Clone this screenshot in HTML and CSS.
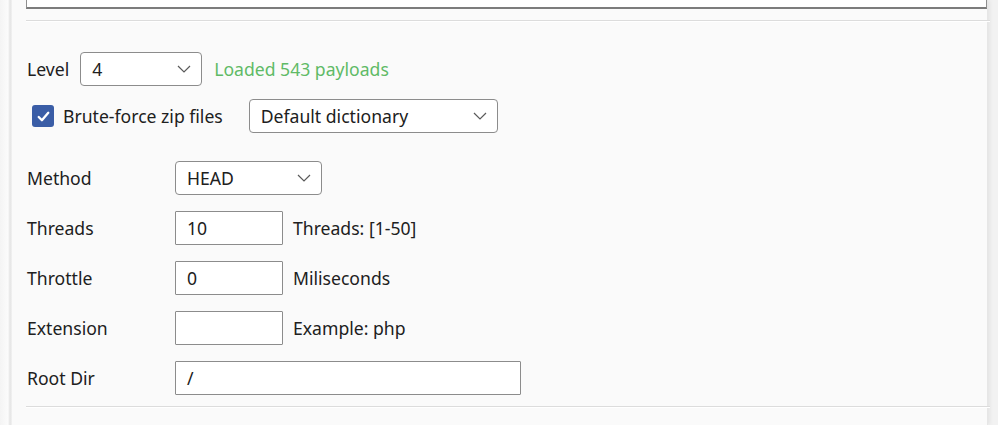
FILE: index.html
```html
<!DOCTYPE html>
<html lang="en">
<head>
    <meta charset="UTF-8">
    <title>Directory scan options</title>
    <link rel="stylesheet" href="styles.css">
</head>
<body>
<div class="panel">
    <div class="results"></div>
    <hr class="rule">

    <div class="line level-line">
        <span class="label">Level</span>
        <div class="select level-select">
            <span>4</span>
            <svg class="chevron" viewBox="0 0 14 8"><path d="M1 1l6 6 6-6"/></svg>
        </div>
        <span class="loaded">Loaded 543 payloads</span>
    </div>

    <div class="line zip-line">
        <label class="check">
            <span class="box">
                <svg viewBox="0 0 16 16"><path d="M3.5 8.5l3 3 6-7"/></svg>
            </span>
            Brute-force zip files
        </label>
        <div class="select dict-select">
            <span>Default dictionary</span>
            <svg class="chevron" viewBox="0 0 14 8"><path d="M1 1l6 6 6-6"/></svg>
        </div>
    </div>

    <div class="form">
        <span class="label">Method</span>
        <div class="field">
            <div class="select method-select">
                <span>HEAD</span>
                <svg class="chevron" viewBox="0 0 14 8"><path d="M1 1l6 6 6-6"/></svg>
            </div>
        </div>

        <span class="label">Threads</span>
        <div class="field">
            <div class="input">10</div>
            <span class="hint">Threads: [1-50]</span>
        </div>

        <span class="label">Throttle</span>
        <div class="field">
            <div class="input">0</div>
            <span class="hint">Miliseconds</span>
        </div>

        <span class="label">Extension</span>
        <div class="field">
            <div class="input"></div>
            <span class="hint">Example: php</span>
        </div>

        <span class="label">Root Dir</span>
        <div class="field">
            <div class="input wide">/</div>
        </div>
    </div>

    <hr class="rule bottom">
</div>
</body>
</html>
```

FILE: styles.css
```css
html, body {
    margin: 0;
    height: 100%;
}
body {
    overflow: hidden;
    background: linear-gradient(to right, #f4f4f4 0, #fbfbfb 8px, #e4e4e4 10px, #f2f2f2 12px);
    font: 17.6px "Noto Sans", "Open Sans", sans-serif;
    color: #202020;
}
.panel {
    display: flow-root;
    box-sizing: border-box;
    margin: 0 11px 0 12px;
    height: 100%;
    padding: 0 0 0 14px;
    background-color: #fafafa;
    box-shadow: 1px 0 0 #e6e6e6, 3px 0 4px rgba(0,0,0,.06);
}
.results {
    margin: -40px 0 0 0;
    height: 46px;
    border: 1px solid #8f8f8f;
    border-bottom: 2px solid #7c7c7c;
    background-color: #fff;
}
.rule {
    margin: 11px -3px 0 0;
    border: 0;
    height: 0;
    border-top: 1px solid #dcdcdc;
    box-shadow: 0 1px 0 #fff;
}
.rule.bottom {
    margin-top: 11px;
}

.line {
    display: flex;
    align-items: center;
}
.level-line {
    margin-top: 31px;
}
.zip-line {
    margin-top: 13px;
    padding-left: 6px;
}
.label {
    padding-left: 1px;
}
.level-line .label {
    margin-right: 11px;
}

.select {
    box-sizing: border-box;
    height: 34px;
    display: flex;
    align-items: center;
    justify-content: space-between;
    padding: 0 10px 0 11px;
    border: 1px solid #8c8c8c;
    border-radius: 4px;
    background-color: #fff;
}
.chevron {
    width: 14px;
    height: 8px;
    fill: none;
    stroke: #5a5a5a;
    stroke-width: 1.2;
}
.level-select {
    width: 122px;
}
.dict-select {
    width: 249px;
    margin-left: 26px;
}
.method-select {
    width: 147px;
}
.loaded {
    margin-left: 12px;
    color: #5fba66;
}

.check {
    display: flex;
    align-items: center;
}
.check .box {
    width: 22px;
    height: 22px;
    margin-right: 9px;
    border-radius: 3px;
    background-color: #3a5da6;
    display: flex;
    align-items: center;
    justify-content: center;
}
.check .box svg {
    width: 17px;
    height: 17px;
    fill: none;
    stroke: #fff;
    stroke-width: 2.2;
    stroke-linecap: round;
    stroke-linejoin: round;
}

.form {
    margin-top: 28px;
    display: grid;
    grid-template-columns: 149px auto;
    row-gap: 16px;
    align-items: center;
}
.field {
    display: flex;
    align-items: center;
}
.input {
    box-sizing: border-box;
    width: 108px;
    height: 34px;
    line-height: 32px;
    padding: 0 11px;
    border: 1px solid #8c8c8c;
    border-radius: 1px;
    background-color: #fff;
}
.input.wide {
    width: 346px;
}
.hint {
    margin-left: 10px;
}
```
